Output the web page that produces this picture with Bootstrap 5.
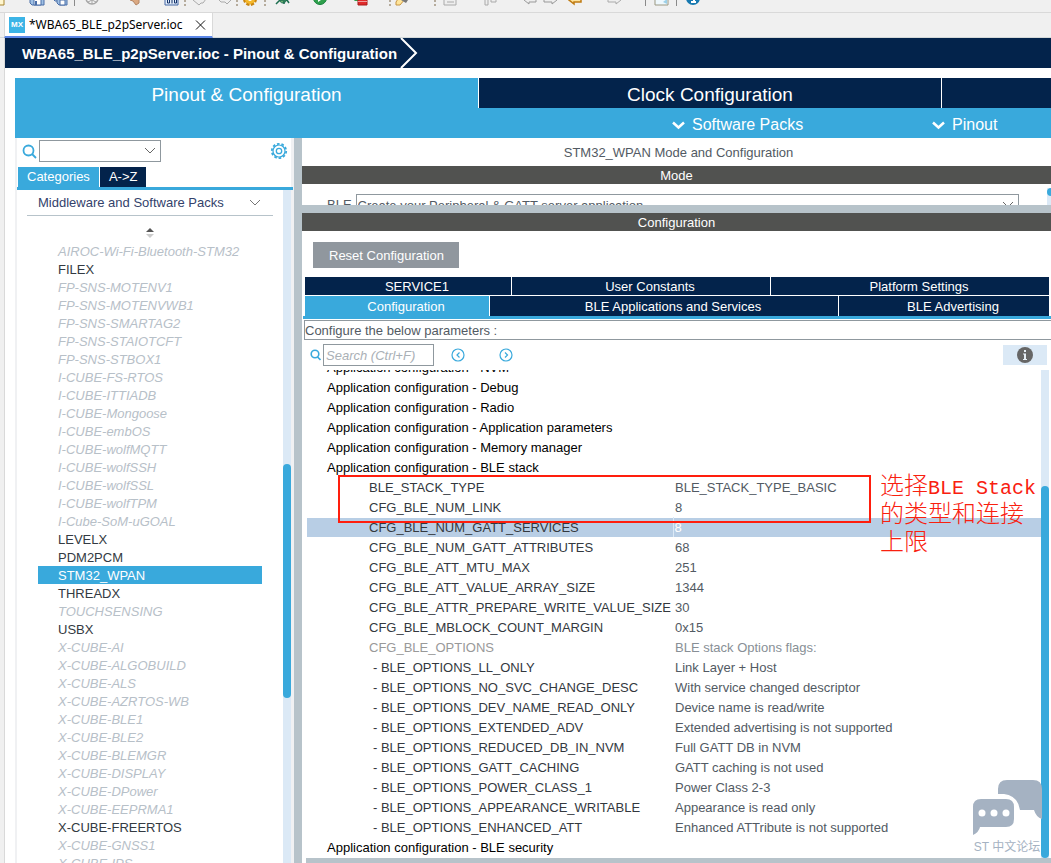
<!DOCTYPE html>
<html lang="en">
<head>
<meta charset="utf-8">
<meta name="viewport" content="width=device-width, initial-scale=1">
<title>WBA65_BLE_p2pServer.ioc - Pinout &amp; Configuration</title>
<link href="https://cdn.jsdelivr.net/npm/bootstrap@5.3.0/dist/css/bootstrap.min.css" rel="stylesheet">
<style>
:root{--navy:#03234b;--sky:#39a9dc;--split:#b7c3ca;--bar:#515250;--rail:#dbe9f6;--line:#8f989e}
body{font:13px/18px "Liberation Sans",Arial,sans-serif;color:#525a63;background:#f0f0f0}
button{font:inherit;color:inherit;border:0;background:none;padding:0}
svg{display:block;flex:none}
.toolstrip{height:13px;padding-bottom:6px;border-bottom:1px solid #d9d9d9;grid-template-columns:28px 24px 22px 10px 43px 37px 20px 8px 24px 20px 6px 22px 11px 37px 40px 37px 5px 40px 9px 40px 40px 19px 26px 38px 39px 9px 22px 10px 20px;align-items:end;align-content:end}
.tool-rule{width:1px;height:16px;background:#8a8a8a}
.tool-dots{width:2px;height:14px;background:repeating-linear-gradient(#b5ab9c 0 2px,transparent 2px 4px)}
.tabstrip{height:25px;padding-left:4px;border-bottom:1px solid #d4d9d9}
.file-tab{width:209px;height:25px;background:#fff;border:solid #d9d9d9;border-width:0 1px;border-bottom:2px solid #5b87e8;padding-left:4px;gap:4px;color:#000;font:12px/24px "Noto Sans","Open Sans",sans-serif}
.mx{width:16px;height:16px;background:#3cb4e6;color:#fff;font:bold 8px/16px "Liberation Sans",sans-serif;text-align:center}
.editor{margin-left:4px;border-left:1px solid #d9d9d9;min-height:0}
.crumb{height:30px;background:var(--navy);color:#fff;font-weight:bold;font-size:15px;padding:2px 0 0 17px;gap:3px}
.crumb svg{margin-top:-2px}
.main-area{padding:10px 0 0 10px;min-height:0}
.main-tabs{grid-template-columns:463fr 463fr 110fr;height:30px;background:var(--navy);font-size:19px;color:#fff}
.main-tabs button{padding-top:3px}
.main-tabs button+button{border-left:1px solid #fff}
.main-tabs .on,.sub-tabs{background:var(--sky)}
.sub-tabs{grid-template-columns:657fr 260fr 119fr;height:30px;font-size:16px;color:#fff;padding-top:4px}
.sub-tabs button{gap:7px;grid-row:1}
.sub-tabs .packs-menu{grid-column:2}
.sub-tabs .pinout-menu{grid-column:3}
.left-pane{width:279px;border:solid #f0f1f3;border-width:0 3px 0 2px}
.combo{appearance:none;height:22px;border:1px solid var(--line);color:inherit;background:#fff url("data:image/svg+xml,%3Csvg xmlns='http://www.w3.org/2000/svg' width='12' height='8'%3E%3Cpath d='M1 1l5 5 5-5' fill='none' stroke='%23666'/%3E%3C/svg%3E") no-repeat right 4px center;font:inherit;padding:2px 20px 0 1px}
.left-pane .combo{width:122px;margin-left:2px}
.finder{height:29px;padding:2px 3px 5px 5px}
.cat-tabs{height:23px;border-bottom:3px solid var(--sky);gap:1px;padding-left:1px;color:#fff;margin-right:-2px}
.cat-tabs button{background:var(--navy);height:20px;padding:0 9px}
.cat-tabs .on{background:var(--sky)}
.packs{padding:4px 10px 0}
.pack-head{width:100%;height:22px;border-bottom:1px solid var(--split);color:#33426b;padding:0 12px 3px 11px}
.packs ul{margin:0;padding:0 11px}
.packs li{padding-left:20px;height:18px;line-height:20px;color:#333a42;white-space:nowrap}
.packs li.off{font-style:italic;color:#b7c0c8}
.packs li.sel{background:var(--sky);color:#fff}
.rail{width:8px;background:var(--rail)}
.thumb{background:var(--sky);border-radius:4px}
.split-v{width:8px;background:var(--split)}
.split-h{height:8px;background:var(--split)}
.head-bar{background:var(--bar);color:#fff;height:18px;line-height:20px}
.title-line{line-height:30px;height:28px;padding-left:4px}
.mode-body{height:21px;padding:10px 0 0 25px;gap:4px}
.mode-body .combo{margin-right:24px}
.mode-body label{padding-top:2px}
.mode-body .rail{width:4px;height:24px;margin-top:-6px}
.mode-body .thumb{width:8px;height:8px}
.reset{background:#90979e;color:#fff;height:26px;padding:2px 15px 0 16px;margin:11px 0 9px 11px}
.set-tabs{color:#fff;gap:1px;padding-right:2px;margin-left:3px;background:#fff}
.set-tabs button{background:var(--navy);height:18px;padding:1px 0 0 18px}
.row-a{grid-template-columns:206fr 258fr 278fr}
.row-b{grid-template-columns:184fr 348fr 210fr;margin-top:1px}
.row-b button{height:20px}
.set-tabs .on{background:var(--sky)}
.set-line{height:3px;background:var(--sky);margin:0 0 1px 1px}
.hint{height:20px;line-height:20px;border:1px solid var(--line);border-right:0;margin-left:2px}
.tree-tools{height:30px;padding:0 4px 0 8px}
.tree-tools input{width:111px;height:22px;border:1px solid var(--line);padding:0 2px;margin:0 17px 0 2px;color:#555}
.tree-tools input::placeholder{font-style:italic;color:#aab0b6;opacity:1}
.match-nav{gap:34px}
.info{width:44px;height:20px;background:var(--rail)}
.tree{margin-left:5px;padding-right:2px}
.params{width:100%;table-layout:fixed;border-collapse:collapse;margin-top:-13px}
.params th,.params td{height:20px;padding:2px 0 0;font-weight:normal;white-space:nowrap;line-height:18px}
.params col:first-child{width:366px}
.params th{color:#000;padding-left:20px}
.params td:first-child{padding-left:62px;color:#33383e}
.params td+td{padding-left:2px}
.params .opt td:first-child{padding-left:66px}
.params .flag td:first-child{color:#999}
.params .flag td+td{color:#888f96}
.params .picked{background:linear-gradient(#fff 1px,#b8cee5 1px)}
.params .picked td+td{color:#fff;border-left:1px solid #dbe9f6;padding-left:1px}
.frame-note{position:absolute;left:31px;top:105px;width:533px;height:48px;border:2px solid #ff1e0d}
.text-note{position:absolute;left:573px;top:100px;color:#f9200f;font:24px/28px "Noto Sans CJK SC",sans-serif;font-weight:300;white-space:nowrap}
.text-note span{font:20px/1px "Liberation Mono",monospace}
.forum{position:absolute;right:8px;bottom:0;color:#a5b2c2;font:12px/22px "Liberation Sans","Noto Sans CJK SC",sans-serif}
</style>
</head>
<body class="vh-100 overflow-hidden d-flex flex-column">
<div class="toolstrip d-grid overflow-hidden flex-shrink-0" role="toolbar" aria-label="Main toolbar">
<button aria-label="New"><svg width="5" height="16"><path d="M0 4h4v11H0" fill="#fff6cf" stroke="#a8862f"/></svg></button>
<button aria-label="Save"><svg width="17" height="16"><path d="M2 1h14v14H4l-2-2z" fill="#9fc0e4" stroke="#4a6ea8"/><path d="M6 9h7v6H6z" fill="#fff" stroke="#4a6ea8"/><path d="M7 11h2v4H7z" fill="#4a6ea8"/></svg></button>
<button aria-label="Save all"><svg width="17" height="16"><path d="M1 1h9v10H3l-2-2z" fill="#bcd3ec" stroke="#4a6ea8"/><path d="M5 4h10v11H7l-2-2z" fill="#9fc0e4" stroke="#4a6ea8"/><path d="M8 10h5v5H8z" fill="#fff" stroke="#4a6ea8"/></svg></button>
<i class="tool-rule"></i>
<button aria-label="Target"><svg width="17" height="16"><circle cx="8" cy="8" r="6" fill="#f4f4f4" stroke="#a5a5a5" stroke-width="1.5"/><path d="M8 9v5M8 10l4 2M8 10l-4 2" stroke="#a5a5a5"/></svg></button>
<button aria-label="Build"><svg width="17" height="16"><path d="M3 10l3-5 6 4v4l-3 2-3-4z" fill="#dba982" stroke="#b48666"/></svg></button>
<button aria-label="Binary"><svg width="16" height="16"><path d="M1 3h11l2 2v10H1z" fill="#e3edfa" stroke="#4468a6"/><path d="M3.500 8h2v5h-2zM8 8v5.500M10.500 8h2v5h-2z" fill="none" stroke="#16356b"/></svg></button>
<i class="tool-dots"></i>
<button aria-label="Undo"><svg width="17" height="16"><path d="M1 10l5-4v3h8l-3 4H9l-2 2z" fill="#eee" stroke="#aaa"/></svg></button>
<button aria-label="Redo"><svg width="17" height="16"><path d="M15 10l-5-4v3H2l3 3h4l2 2z" fill="#eee" stroke="#aaa"/></svg></button>
<i class="tool-dots"></i>
<button aria-label="Generate"><svg width="17" height="16"><circle cx="8" cy="9" r="5.500" fill="#f4b82c" stroke="#c98410" stroke-width="3" stroke-dasharray="3 1.500"/><circle cx="8" cy="9" r="5" fill="#f4b82c"/><circle cx="8" cy="9" r="2" fill="#fff"/></svg></button>
<i class="tool-dots"></i>
<button aria-label="Debug"><svg width="17" height="16"><ellipse cx="8" cy="8" rx="4" ry="5" fill="#69ad70" stroke="#1d6e50"/><path d="M1 14l4-4h7l2 3M9 11v3" fill="none" stroke="#1d6e50" stroke-width="1.500"/></svg></button>
<button aria-label="Run"><svg width="16" height="16"><circle cx="8" cy="8" r="6.500" fill="#2fa04c" stroke="#14803a"/><path d="M6 4l6 4-6 4z" fill="#fff"/></svg></button>
<button aria-label="External tools"><svg width="16" height="16"><path d="M2 11l5-6 2 6z" fill="#2fa04c"/><path d="M6 9h9v6H6z" fill="#e12b2b" stroke="#a91a1a"/><path d="M6 11.500h9" stroke="#f09a9a"/></svg></button>
<i class="tool-dots"></i>
<button aria-label="Search"><svg width="17" height="16"><path d="M2 12l4-6 5 3-5 6H2z" fill="#ffe59a" stroke="#c69442"/><path d="M8 6l6 4-2 3-5-3z" fill="#777"/></svg></button>
<i class="tool-dots"></i>
<button aria-label="Outline"><svg width="16" height="16"><path d="M1 9h3V2h9v13H1zM6 9h5M4 12h7" fill="#eee" stroke="#aaa"/></svg></button>
<button aria-label="Pin"><svg width="16" height="16"><path d="M2 2h3v13H2zM5 4h8v8H8V9H5" fill="#eee" stroke="#aaa"/></svg></button>
<button aria-label="Previous edit"><svg width="16" height="16"><path d="M1 10l5-5v3h7v4H6v2z" fill="#eee" stroke="#999"/></svg></button>
<button aria-label="Next edit"><svg width="16" height="16"><path d="M15 10l-5-5v3H2v4h8v2z" fill="#eee" stroke="#999"/></svg></button>
<button aria-label="Back"><svg width="16" height="16"><path d="M1 10l5-5v3h7v4H6v2z" fill="#ffe39a" stroke="#bf7b13" stroke-width="1.500"/></svg></button>
<button aria-label="Forward"><svg width="16" height="16"><path d="M15 10l-5-5v3H2v4h8v2z" fill="#eee" stroke="#aaa"/></svg></button>
<i class="tool-rule"></i>
<button aria-label="Perspective"><svg width="16" height="16"><path d="M1 2h13v13H1z" fill="#eef8fd" stroke="#9b9882"/><path d="M9 12l4-3v5z" fill="#9cd0e8"/></svg></button>
<i class="tool-rule"></i>
<button aria-label="Information"><svg width="16" height="16"><circle cx="7" cy="8" r="7" fill="#1779b0"/><path d="M5 7h3v5M5 12h5" fill="none" stroke="#fff" stroke-width="2"/></svg></button>
</div>
<div class="tabstrip flex-shrink-0">
<div class="file-tab d-flex align-items-center"><span class="mx">MX</span><span>*WBA65_BLE_p2pServer.ioc</span><button class="ms-2" aria-label="Close"><svg width="11" height="10"><path d="M1 .5l9 9M10 .5l-9 9" stroke="#111" fill="none"/></svg></button></div>
</div>
<div class="editor bg-white flex-grow-1 d-flex flex-column">
<div class="crumb d-flex align-items-center flex-shrink-0"><span>WBA65_BLE_p2pServer.ioc - Pinout &amp; Configuration</span><svg width="18" height="30"><path d="M1 0l15 15L1 30" fill="none" stroke="#fff" stroke-width="2"/></svg></div>
<main class="main-area flex-grow-1 d-flex flex-column">
<div class="main-tabs d-grid flex-shrink-0"><button class="on">Pinout &amp; Configuration</button><button>Clock Configuration</button><button aria-label="Project Manager"></button></div>
<div class="sub-tabs d-grid flex-shrink-0">
<button class="packs-menu d-flex align-items-center"><svg width="13" height="9"><path d="M1 1.500l5.500 5 5.500-5" fill="none" stroke="#fff" stroke-width="2.500"/></svg>Software Packs</button>
<button class="pinout-menu d-flex align-items-center"><svg width="13" height="9"><path d="M1 1.500l5.500 5 5.500-5" fill="none" stroke="#fff" stroke-width="2.500"/></svg>Pinout</button>
</div>
<div class="d-flex flex-grow-1 overflow-hidden">
<aside class="left-pane d-flex flex-column flex-shrink-0">
<div class="finder d-flex align-items-center flex-shrink-0">
<svg width="15" height="15" fill="none" stroke="#39a9dc" stroke-width="1.800"><circle cx="6.500" cy="6.500" r="5"/><path d="M10 10l4 4"/></svg>
<select class="combo" aria-label="Search categories"><option></option></select>
<button aria-label="Settings" class="ms-auto"><svg width="18" height="18" fill="none" stroke="#39a9dc"><circle cx="9" cy="9" r="7.200" stroke-width="1.800" stroke-dasharray="2.600 1.920"/><circle cx="9" cy="9" r="6" stroke-width="1.200"/><circle cx="9" cy="9" r="2.700" stroke-width="1.300"/></svg></button>
</div>
<div class="cat-tabs d-flex flex-shrink-0"><button class="on">Categories</button><button>A-&gt;Z</button></div>
<div class="d-flex flex-grow-1 overflow-hidden">
<div class="packs flex-grow-1 overflow-hidden">
<button class="pack-head d-flex align-items-center justify-content-between">Middleware and Software Packs<svg width="12" height="8"><path d="M1 1l5 5 5-5" fill="none" stroke="#777"/></svg></button>
<svg class="mx-auto mt-2" width="10" height="18"><path d="M1 8l4-4 4 4z" fill="#555"/><path d="M1 10h8l-4 4z" fill="#ccc"/></svg>
<ul class="list-unstyled">
<li class="off">AIROC-Wi-Fi-Bluetooth-STM32</li><li>FILEX</li><li class="off">FP-SNS-MOTENV1</li><li class="off">FP-SNS-MOTENVWB1</li><li class="off">FP-SNS-SMARTAG2</li><li class="off">FP-SNS-STAIOTCFT</li><li class="off">FP-SNS-STBOX1</li><li class="off">I-CUBE-FS-RTOS</li><li class="off">I-CUBE-ITTIADB</li><li class="off">I-CUBE-Mongoose</li><li class="off">I-CUBE-embOS</li><li class="off">I-CUBE-wolfMQTT</li><li class="off">I-CUBE-wolfSSH</li><li class="off">I-CUBE-wolfSSL</li><li class="off">I-CUBE-wolfTPM</li><li class="off">I-Cube-SoM-uGOAL</li><li>LEVELX</li><li>PDM2PCM</li><li class="sel">STM32_WPAN</li><li>THREADX</li><li class="off">TOUCHSENSING</li><li>USBX</li><li class="off">X-CUBE-AI</li><li class="off">X-CUBE-ALGOBUILD</li><li class="off">X-CUBE-ALS</li><li class="off">X-CUBE-AZRTOS-WB</li><li class="off">X-CUBE-BLE1</li><li class="off">X-CUBE-BLE2</li><li class="off">X-CUBE-BLEMGR</li><li class="off">X-CUBE-DISPLAY</li><li class="off">X-CUBE-DPower</li><li class="off">X-CUBE-EEPRMA1</li><li>X-CUBE-FREERTOS</li><li class="off">X-CUBE-GNSS1</li><li class="off">X-CUBE-IPS</li>
</ul>
</div>
<div class="rail flex-shrink-0 d-flex flex-column"><div style="flex:274"></div><div class="thumb" style="flex:234"></div><div style="flex:165"></div></div>
</div>
</aside>
<div class="split-v flex-shrink-0"></div>
<section class="flex-grow-1 d-flex flex-column overflow-hidden">
<div class="title-line text-center flex-shrink-0">STM32_WPAN Mode and Configuration</div>
<div class="head-bar text-center flex-shrink-0">Mode</div>
<div class="mode-body d-flex overflow-hidden flex-shrink-0"><label for="ble" class="text-nowrap">BLE</label><select id="ble" class="combo flex-grow-1"><option>Create your Peripheral &amp; GATT server application</option></select><div class="rail flex-shrink-0"><div class="thumb"></div></div></div>
<div class="split-h flex-shrink-0"></div>
<div class="head-bar text-center flex-shrink-0">Configuration</div>
<div class="flex-shrink-0 d-flex"><button class="reset">Reset Configuration</button></div>
<div class="set-tabs row-a d-grid flex-shrink-0"><button>SERVICE1</button><button>User Constants</button><button>Platform Settings</button></div>
<div class="set-tabs row-b d-grid flex-shrink-0"><button class="on">Configuration</button><button>BLE Applications and Services</button><button>BLE Advertising</button></div>
<div class="set-line flex-shrink-0"></div>
<div class="hint flex-shrink-0">Configure the below parameters :</div>
<div class="tree-tools d-flex align-items-center flex-shrink-0">
<svg width="11" height="12" fill="none" stroke="#39a9dc" stroke-width="1.600"><circle cx="5" cy="5" r="3.800"/><path d="M7.500 8l3 3"/></svg>
<input type="text" placeholder="Search (Ctrl+F)" aria-label="Search parameters">
<div class="match-nav d-flex">
<button aria-label="Previous match"><svg width="14" height="14" fill="none" stroke="#39a9dc" stroke-width="1.200"><circle cx="7" cy="7" r="6"/><path d="M8.500 4.500L6 7l2.500 2.500"/></svg></button>
<button aria-label="Next match"><svg width="14" height="14" fill="none" stroke="#39a9dc" stroke-width="1.200"><circle cx="7" cy="7" r="6"/><path d="M6 4.500L8.500 7 6 9.500"/></svg></button>
</div>
<button class="info ms-auto d-flex align-items-center justify-content-center" aria-label="Information"><svg width="16" height="16"><circle cx="8" cy="8" r="8" fill="#666"/><path d="M7 3h2v2H7zM6 6.500h3V12h1v1H6v-1h1V7.500H6z" fill="#e6eef5"/></svg></button>
</div>
<div class="tree d-flex flex-grow-1 overflow-hidden position-relative">
<div class="flex-grow-1 overflow-hidden">
<table class="params"><colgroup><col><col></colgroup>
<tbody>
<tr><th colspan="2">Application configuration - NVM</th></tr>
<tr><th colspan="2">Application configuration - Debug</th></tr>
<tr><th colspan="2">Application configuration - Radio</th></tr>
<tr><th colspan="2">Application configuration - Application parameters</th></tr>
<tr><th colspan="2">Application configuration - Memory manager</th></tr>
<tr><th colspan="2">Application configuration - BLE stack</th></tr>
<tr><td>BLE_STACK_TYPE</td><td>BLE_STACK_TYPE_BASIC</td></tr>
<tr><td>CFG_BLE_NUM_LINK</td><td>8</td></tr>
<tr class="picked"><td>CFG_BLE_NUM_GATT_SERVICES</td><td>8</td></tr>
<tr><td>CFG_BLE_NUM_GATT_ATTRIBUTES</td><td>68</td></tr>
<tr><td>CFG_BLE_ATT_MTU_MAX</td><td>251</td></tr>
<tr><td>CFG_BLE_ATT_VALUE_ARRAY_SIZE</td><td>1344</td></tr>
<tr><td>CFG_BLE_ATTR_PREPARE_WRITE_VALUE_SIZE</td><td>30</td></tr>
<tr><td>CFG_BLE_MBLOCK_COUNT_MARGIN</td><td>0x15</td></tr>
<tr class="flag"><td>CFG_BLE_OPTIONS</td><td>BLE stack Options flags:</td></tr>
<tr class="opt"><td>- BLE_OPTIONS_LL_ONLY</td><td>Link Layer + Host</td></tr>
<tr class="opt"><td>- BLE_OPTIONS_NO_SVC_CHANGE_DESC</td><td>With service changed descriptor</td></tr>
<tr class="opt"><td>- BLE_OPTIONS_DEV_NAME_READ_ONLY</td><td>Device name is read/write</td></tr>
<tr class="opt"><td>- BLE_OPTIONS_EXTENDED_ADV</td><td>Extended advertising is not supported</td></tr>
<tr class="opt"><td>- BLE_OPTIONS_REDUCED_DB_IN_NVM</td><td>Full GATT DB in NVM</td></tr>
<tr class="opt"><td>- BLE_OPTIONS_GATT_CACHING</td><td>GATT caching is not used</td></tr>
<tr class="opt"><td>- BLE_OPTIONS_POWER_CLASS_1</td><td>Power Class 2-3</td></tr>
<tr class="opt"><td>- BLE_OPTIONS_APPEARANCE_WRITABLE</td><td>Appearance is read only</td></tr>
<tr class="opt"><td>- BLE_OPTIONS_ENHANCED_ATT</td><td>Enhanced ATTribute is not supported</td></tr>
<tr><th colspan="2">Application configuration - BLE security</th></tr>
</tbody></table>
</div>
<div class="rail ms-auto flex-shrink-0 d-flex flex-column"><div style="flex:116"></div><div class="thumb" style="flex:372"></div></div>
<div class="frame-note"></div>
<div class="text-note">选择<span>BLE Stack</span><br>的类型和连接<br>上限</div>
<div class="forum"><svg width="72" height="56"><path d="M27 14V9q0-9 9-9h26q9 0 9 9v30q-6-2-8-9H49q-2-14-16-16z" fill="#a5b2c2"/><path d="M10 19h25q8 0 8 8v12q0 8-8 8H9q-1 5-7 8V27q0-8 8-8z" fill="#a5b2c2"/><g fill="#fff"><circle cx="11" cy="33" r="3.500"/><circle cx="23" cy="33" r="3.500"/><circle cx="35" cy="33" r="3.500"/></g></svg><div class="text-center text-nowrap">ST 中文论坛</div></div>
</div>
<div class="split-h flex-shrink-0 ms-1" style="height:5px"></div>
</section>
</div>
</main>
</div>
<script src="https://cdn.jsdelivr.net/npm/bootstrap@5.3.0/dist/js/bootstrap.bundle.min.js"></script>
</body>
</html>
